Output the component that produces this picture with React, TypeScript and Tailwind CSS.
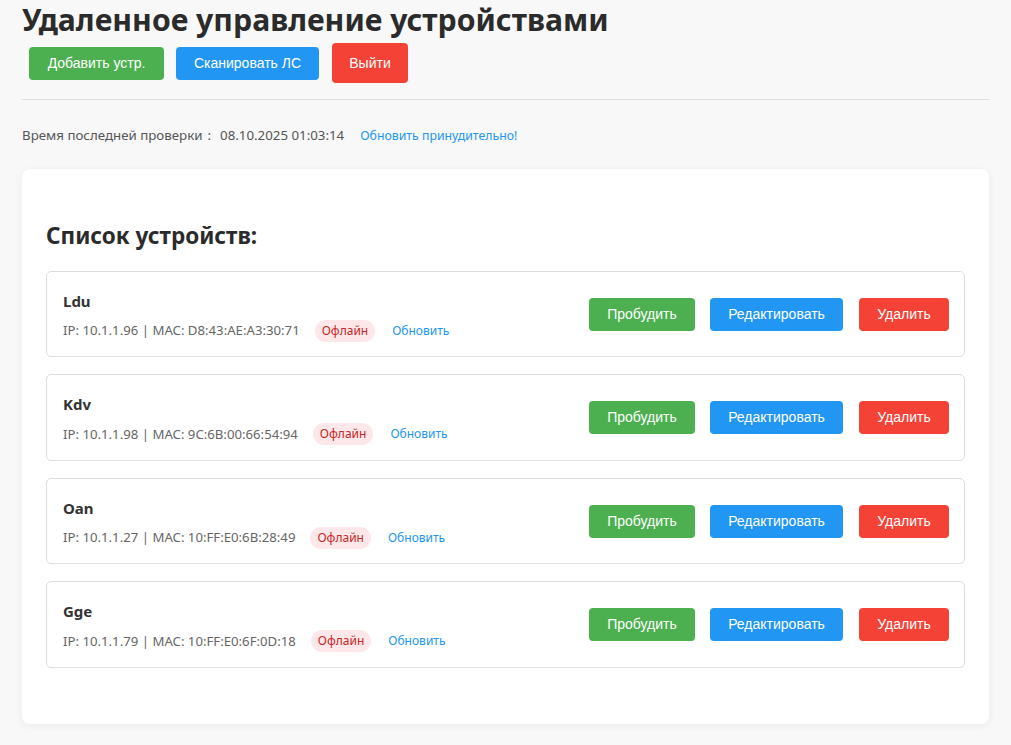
const devices = [
  { name: "Ldu", ip: "10.1.1.96", mac: "D8:43:AE:A3:30:71" },
  { name: "Kdv", ip: "10.1.1.98", mac: "9C:6B:00:66:54:94" },
  { name: "Oan", ip: "10.1.1.27", mac: "10:FF:E0:6B:28:49" },
  { name: "Gge", ip: "10.1.1.79", mac: "10:FF:E0:6F:0D:18" },
];

const btn =
  "h-[33px] px-4 rounded-[4px] text-white text-[14px] font-['Liberation_Sans',Arial,sans-serif]";

function DeviceRow({ name, ip, mac }: { name: string; ip: string; mac: string }) {
  return (
    <div className="flex items-center justify-between border border-[#dddddd] rounded-[5px] pl-4 pr-[15px] h-[86.5px]">
      <div className="flex flex-col self-start pt-[19px]">
        <div className="text-[15px] font-bold text-[#333] leading-5">{name}</div>
        <div className="flex items-center mt-[9px] text-[13.2px] text-[#666]">
          <span>
            IP: {ip} | MAC: {mac}
          </span>
          <span className="ml-[15px] px-[7px] h-[22px] flex items-center rounded-full bg-[#fde7e9] text-[#c62828] text-[12px]">
            Офлайн
          </span>
          <a className="ml-[17px] text-[#2196f3] text-[12px]">Обновить</a>
        </div>
      </div>
      <div className="flex items-center gap-[15px]">
        <button className={`${btn} bg-[#4caf50] w-[106px] px-0`}>Пробудить</button>
        <button className={`${btn} bg-[#2196f3] w-[133px] px-0`}>Редактировать</button>
        <button className={`${btn} bg-[#f44336] w-[90px] px-0 ml-[1px]`}>Удалить</button>
      </div>
    </div>
  );
}

export default function App() {
  return (
    <div className="min-h-screen bg-[#f8f8f8] px-[22px] font-['Noto_Sans','Open_Sans',sans-serif] text-[#333]">
      <h1 className="text-[30.2px] font-bold leading-[40px] text-[#2b2b2b]">
        Удаленное управление устройствами
      </h1>
      <div className="flex items-center ml-[7px] mt-[3px]">
        <button className={`${btn} bg-[#4caf50] w-[135px] h-[32px] px-0`}>Добавить устр.</button>
        <button className={`${btn} bg-[#2196f3] w-[143px] h-[32px] px-0 ml-[12px]`}>Сканировать ЛС</button>
        <button className={`${btn} bg-[#f44336] w-[76px] h-[40px] px-0 ml-[13px]`}>Выйти</button>
      </div>
      <div className="border-t border-[#dddddd] mt-[16px]" />
      <div className="flex items-center mt-[26px] text-[13.3px] text-[#555]">
        <span>Время последней проверки</span>
        <span className="ml-[5px] mr-[9px]">:</span>
        <span>08.10.2025 01:03:14</span>
        <a className="ml-[16px] text-[12.3px] text-[#2196f3]">Обновить принудительно!</a>
      </div>
      <div className="mt-[23px] bg-white rounded-[8px] shadow-[0_2px_8px_rgba(0,0,0,0.06)] px-[24px] pt-[50px] pb-[56px]">
        <h2 className="text-[22.5px] font-bold leading-[32px] text-[#2b2b2b] mt-[1px] mb-[19px]">Список устройств:</h2>
        <div className="flex flex-col gap-[17px]">
          {devices.map((d) => (
            <DeviceRow key={d.name} {...d} />
          ))}
        </div>
      </div>
    </div>
  );
}
